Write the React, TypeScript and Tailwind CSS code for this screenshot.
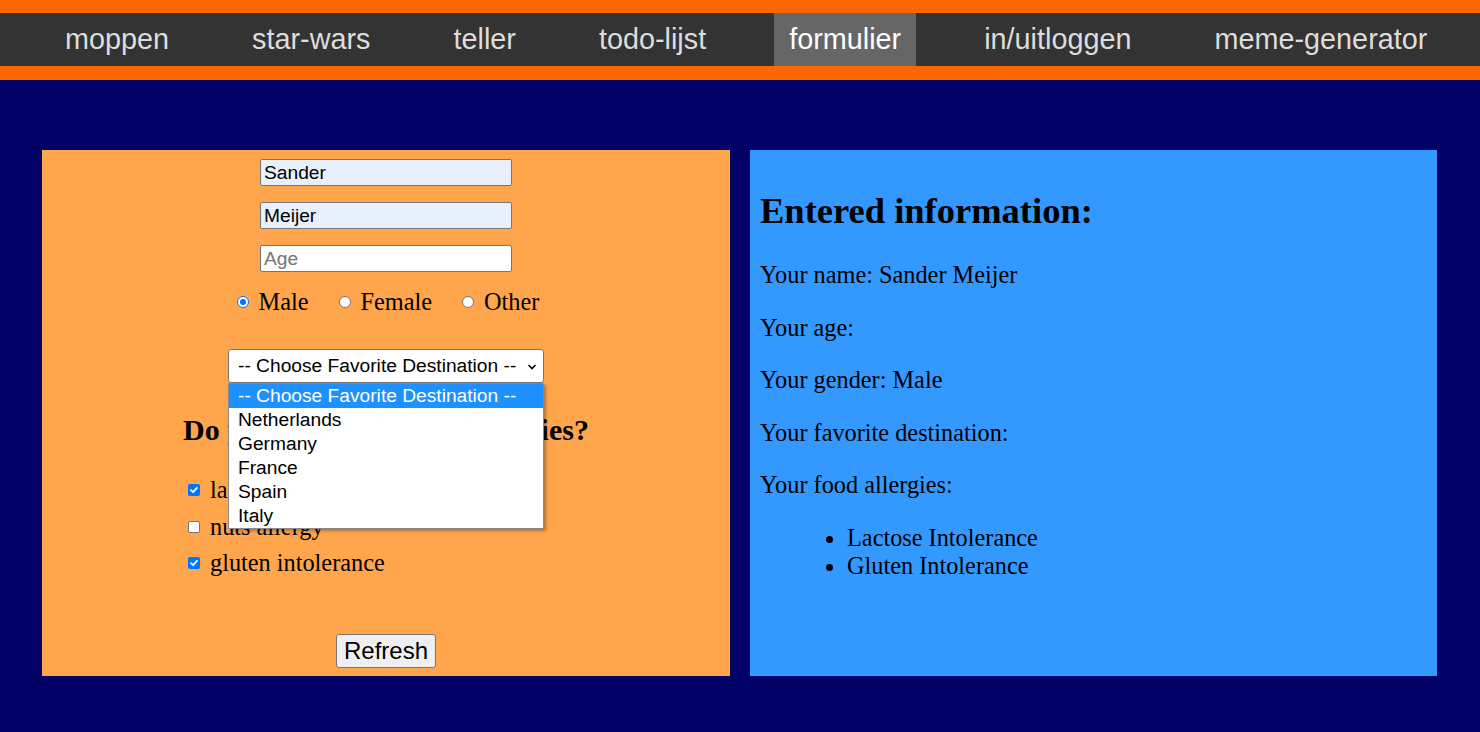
import { useState } from "react";

const navItems = [
  "moppen",
  "star-wars",
  "teller",
  "todo-lijst",
  "formulier",
  "in/uitloggen",
  "meme-generator",
];

const destinations = [
  "-- Choose Favorite Destination --",
  "Netherlands",
  "Germany",
  "France",
  "Spain",
  "Italy",
];

const Radio = ({ checked }: { checked: boolean }) => (
  <span
    className={`flex h-[12px] w-[12px] items-center justify-center rounded-full border ${
      checked ? "border-[#0075ff] bg-white" : "border-[#767676] bg-white"
    }`}
  >
    {checked && <span className="h-[6px] w-[6px] rounded-full bg-[#0075ff]" />}
  </span>
);

const Checkbox = ({ checked }: { checked: boolean }) =>
  checked ? (
    <span className="flex h-[12px] w-[12px] items-center justify-center rounded-[2px] bg-[#0075ff]">
      <svg width="10" height="10" viewBox="0 0 10 10">
        <path
          d="M2 5.2 L4.1 7.2 L8 2.8"
          fill="none"
          stroke="white"
          strokeWidth="1.8"
          strokeLinecap="round"
          strokeLinejoin="round"
        />
      </svg>
    </span>
  ) : (
    <span className="h-[12px] w-[12px] rounded-[2px] border border-[#767676] bg-white" />
  );

export default function App() {
  const [gender] = useState("Male");
  const [allergies] = useState({ lactose: true, nuts: false, gluten: true });

  return (
    <div className="min-h-[732px] w-[1480px] bg-[#000066]">
      {/* navigatie */}
      <nav className="border-y-[13px] border-b-[14px] border-[#ff6600] bg-[#333333] font-['Liberation_Sans',Arial,sans-serif]">
        <ul className="flex h-[53px] items-stretch gap-[53px] pl-[50px]">
          {navItems.map((item) => (
            <li
              key={item}
              className={`flex items-center px-[15px] text-[28.8px] ${
                item === "formulier"
                  ? "bg-[#666666] text-white"
                  : "text-[#dddddd]"
              }`}
            >
              {item}
            </li>
          ))}
        </ul>
      </nav>

      <main className="flex gap-[20px] px-[42px] pt-[70px] font-['Liberation_Serif','Times_New_Roman',serif] text-black">
        {/* formulier */}
        <form className="flex h-[526px] w-[688px] flex-col items-center bg-[#ffa64d] pt-[9px]">
          <div className="flex flex-col gap-[16px] font-['Liberation_Sans',Arial,sans-serif] text-[19.2px]">
            <div className="flex h-[27px] w-[252px] items-center rounded-[2px] border border-[#767676] bg-[#e8f0fe] px-[3px] pt-[2px]">
              Sander
            </div>
            <div className="flex h-[27px] w-[252px] items-center rounded-[2px] border border-[#767676] bg-[#e8f0fe] px-[3px] pt-[2px]">
              Meijer
            </div>
            <div className="flex h-[27px] w-[252px] items-center rounded-[2px] border border-[#767676] bg-white px-[3px] pt-[2px] text-[#757575]">
              Age
            </div>
          </div>

          <div className="ml-[4px] mt-[16px] flex h-[28px] items-center gap-[30px] text-[24.3px] leading-[28px]">
            {["Male", "Female", "Other"].map((g) => (
              <label key={g} className="flex items-center gap-[10px]">
                <Radio checked={gender === g} />
                {g}
              </label>
            ))}
          </div>

          <div className="relative z-10 mt-[33px] font-['Liberation_Sans',Arial,sans-serif] text-[19.2px]">
            <div className="flex h-[34px] w-[316px] items-center justify-between rounded-[3px] border border-[#767676] bg-white pl-[9px] pr-[6px] pt-[1px]">
              <span>{destinations[0]}</span>
              <svg width="10" height="8" viewBox="0 0 10 8">
                <path
                  d="M1.5 2 L5 5.5 L8.5 2"
                  fill="none"
                  stroke="black"
                  strokeWidth="1.6"
                />
              </svg>
            </div>
            {/* open lijst */}
            <ul className="absolute left-0 top-full w-[316px] border border-[#8a8a8a] bg-white shadow-[2px_2px_3px_rgba(0,0,0,0.3)]">
              {destinations.map((d, i) => (
                <li
                  key={d}
                  className={`flex h-[24px] items-center pl-[9px] ${
                    i === 0 ? "bg-[#1e90ff] text-white" : "text-black"
                  }`}
                >
                  {d}
                </li>
              ))}
            </ul>
          </div>

          <h3 className="mt-[30px] text-[30px] font-bold leading-[34px]">
            Do you have any food allergies?
          </h3>

          <div className="mt-[25px] flex flex-col self-stretch pl-[146px] text-[24.3px]">
            <label className="flex h-[36.5px] items-center gap-[10px]">
              <Checkbox checked={allergies.lactose} />
              lactose intolerance
            </label>
            <label className="flex h-[36.5px] items-center gap-[10px]">
              <Checkbox checked={allergies.nuts} />
              nuts allergy
            </label>
            <label className="flex h-[36.5px] items-center gap-[10px]">
              <Checkbox checked={allergies.gluten} />
              gluten intolerance
            </label>
          </div>

          <button
            type="button"
            className="mt-[52px] flex h-[34px] w-[100px] items-center justify-center rounded-[3px] border border-[#767676] bg-[#efefef] font-['Liberation_Sans',Arial,sans-serif] text-[24px]"
          >
            Refresh
          </button>
        </form>

        {/* ingevulde info */}
        <section className="h-[526px] w-[687px] bg-[#3399ff] p-[10px]">
          <h2 className="mt-[30px] text-[36.5px] font-bold leading-[41px]">
            Entered information:
          </h2>
          <div className="mt-[30px] flex flex-col gap-[24.5px] text-[24.3px] leading-[28px]">
            <p>Your name: Sander Meijer</p>
            <p>Your age: </p>
            <p>Your gender: {gender}</p>
            <p>Your favorite destination: </p>
            <p>Your food allergies:</p>
          </div>
          <ul className="mt-[25px] list-disc pl-[87px] text-[24.3px] leading-[28px]">
            <li>Lactose Intolerance</li>
            <li>Gluten Intolerance</li>
          </ul>
        </section>
      </main>
    </div>
  );
}
